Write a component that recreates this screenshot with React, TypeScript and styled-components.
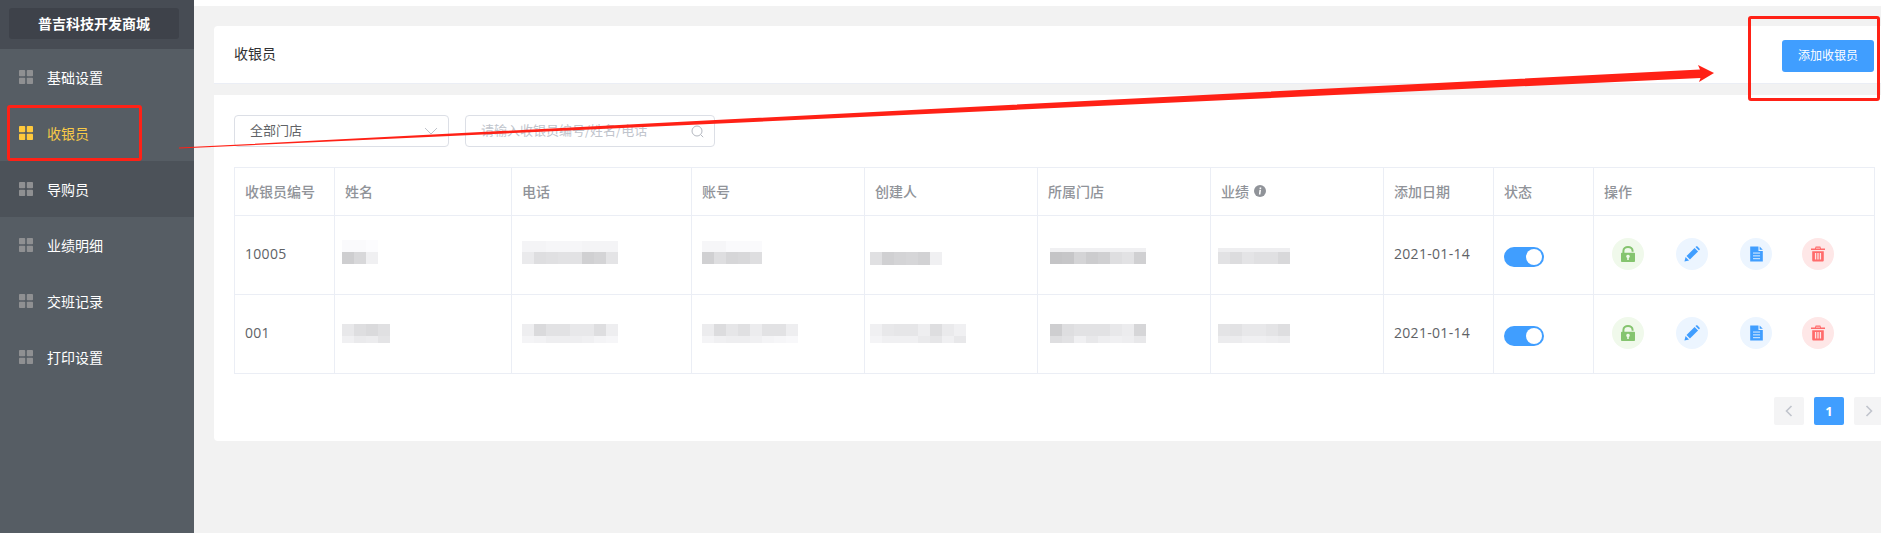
import React from "react";
import styled, { createGlobalStyle } from "styled-components";

const Global = createGlobalStyle`
  html, body { margin: 0; padding: 0; height: 100%; background: #fff; overflow: hidden; }
  body { font-family: "Noto Sans CJK SC", "Open Sans", sans-serif; }
  * { box-sizing: border-box; }
`;

const Page = styled.div`
  position: relative;
  display: flex;
  width: 1881px;
  height: 533px;
  overflow: hidden;
`;

const Sidebar = styled.aside`
  width: 194px;
  flex: none;
  background: #565d64;
`;

const Brand = styled.div`
  height: 49px;
  padding: 8px 15px 10px 9px;
  background: #474c54;
`;

const BrandBox = styled.div`
  height: 31px;
  border-radius: 3px;
  background: #3e424a;
  color: #fff;
  font-size: 14px;
  font-weight: 700;
  line-height: 31px;
  text-align: center;
`;

const MenuItem = styled.div<{ $active?: boolean; $dark?: boolean }>`
  display: flex;
  align-items: center;
  gap: 14px;
  height: 56px;
  padding-left: 19px;
  background: ${(p) => (p.$dark ? "#4c5259" : "transparent")};
  color: ${(p) => (p.$active ? "#f7c948" : "#fff")};
  font-size: 14px;
`;

const Main = styled.main`
  flex: 1;
  min-width: 0;
  margin-top: 6px;
  padding: 20px 0 0 20px;
  background: #f2f2f2;
`;

const TitleBar = styled.header`
  display: flex;
  align-items: center;
  justify-content: space-between;
  height: 58px;
  padding: 0 7px 0 20px;
  border-radius: 4px 0 0 0;
  border-bottom: 1px solid #ebeef5;
  background: #fff;
  color: #303133;
  font-size: 14px;
`;

const TitleText = styled.span`
  margin-bottom: 4px;
`;

const AddButton = styled.button`
  width: 92px;
  height: 32px;
  margin-top: 2px;
  padding: 0 0 2px;
  border: 0;
  border-radius: 3px;
  background: #409eff;
  color: #fff;
  font-family: inherit;
  font-size: 12px;
`;

const Card = styled.section`
  height: 346px;
  margin-top: 11px;
  padding: 20px 7px 0 20px;
  border-radius: 0 0 0 4px;
  background: #fff;
`;

const Filters = styled.div`
  display: flex;
  gap: 16px;
  height: 32px;
`;

const Field = styled.div<{ $w: number }>`
  display: flex;
  align-items: center;
  justify-content: space-between;
  width: ${(p) => p.$w}px;
  height: 32px;
  padding: 0 10px 0 15px;
  border: 1px solid #dcdfe6;
  border-radius: 4px;
  color: #606266;
  font-size: 13px;
`;

const FieldText = styled.span`
  margin-bottom: 3px;
`;

const Placeholder = styled(FieldText)`
  color: #c0c4cc;
`;

const Table = styled.table`
  width: 1640px;
  margin-top: 20px;
  border-collapse: collapse;
  table-layout: fixed;
  font-size: 14px;
  color: #606266;
`;

const Th = styled.th`
  height: 48px;
  padding: 0 0 2px 10px;
  border: 1px solid #ebeef5;
  color: #909399;
  font-size: 14px;
  font-weight: 500;
  text-align: left;
`;

const Td = styled.td`
  height: 79px;
  padding: 0 0 0 10px;
  border: 1px solid #ebeef5;
  font-family: "Open Sans", "Noto Sans CJK SC", sans-serif;
`;

const TextTd = styled(Td)`
  padding-bottom: 3px;
  letter-spacing: 0.3px;
`;

const HeadInner = styled.span`
  display: inline-flex;
  align-items: center;
  gap: 5px;
`;

const Mosaic = styled.div<{ $x: number; $y: number }>`
  display: flex;
  flex-direction: column;
  margin-left: ${(p) => p.$x}px;
  transform: translateY(${(p) => p.$y}px);
`;

const PixelRow = styled.div<{ $h: number }>`
  display: flex;
  height: ${(p) => p.$h}px;
`;

const Pixel = styled.span<{ $c: number }>`
  width: 12px;
  background: rgb(${(p) => p.$c}, ${(p) => p.$c}, ${(p) => p.$c + 2});
`;

const Toggle = styled.div`
  position: relative;
  top: 2px;
  width: 40px;
  height: 20px;
  border-radius: 10px;
  background: #409eff;
  &::after {
    content: "";
    position: absolute;
    top: 2px;
    right: 2px;
    width: 16px;
    height: 16px;
    border-radius: 50%;
    background: #fff;
  }
`;

const Actions = styled.div`
  display: flex;
  padding-left: 8px;
  margin-top: -2px;
`;

const Round = styled.span<{ $bg: string; $gap: number }>`
  display: flex;
  align-items: center;
  justify-content: center;
  flex: none;
  width: 32px;
  height: 32px;
  margin-right: ${(p) => p.$gap}px;
  border-radius: 50%;
  background: ${(p) => p.$bg};
`;

const Pager = styled.div`
  display: flex;
  justify-content: flex-end;
  gap: 10px;
  margin-top: 23px;
  margin-right: -10px;
`;

const PageBtn = styled.span<{ $on?: boolean }>`
  display: flex;
  align-items: center;
  justify-content: center;
  flex: none;
  width: 30px;
  height: 28px;
  border-radius: 2px;
  background: ${(p) => (p.$on ? "#409eff" : "#f4f4f5")};
  color: #fff;
  font-family: "Open Sans", sans-serif;
  font-size: 13px;
  font-weight: 700;
`;

const Mark = styled.div<{ $l: number; $t: number; $w: number; $h: number }>`
  position: absolute;
  left: ${(p) => p.$l}px;
  top: ${(p) => p.$t}px;
  width: ${(p) => p.$w}px;
  height: ${(p) => p.$h}px;
  border: 3px solid #ff2116;
  border-radius: 3px;
  pointer-events: none;
`;

const ArrowSvg = styled.svg`
  position: absolute;
  left: 0;
  top: 0;
  pointer-events: none;
`;

const Grid = ({ color }: { color: string }) => (
  <svg width="14" height="14" viewBox="0 0 14 14" fill={color}>
    <rect x="0" y="0" width="6.2" height="6.2" rx="0.8" />
    <rect x="7.8" y="0" width="6.2" height="6.2" rx="0.8" />
    <rect x="0" y="7.8" width="6.2" height="6.2" rx="0.8" />
    <rect x="7.8" y="7.8" width="6.2" height="6.2" rx="0.8" />
  </svg>
);

const LockIcon = () => (
  <svg width="14" height="16" viewBox="0 0 14 16">
    <path d="M2.4 7V4.9C2.4 2.6 4.5 1 7 1s4.6 1.6 4.6 3.9v.8" fill="none" stroke="#85c46f" strokeWidth="2" />
    <path
      fillRule="evenodd"
      fill="#85c46f"
      d="M.8 6.8h12.4c.4 0 .8.4.8.8v7.6c0 .4-.4.8-.8.8H.8c-.4 0-.8-.4-.8-.8V7.6c0-.4.4-.8.8-.8zM7 8.7a1.8 1.8 0 0 0-.8 3.4V14h1.6v-1.9A1.8 1.8 0 0 0 7 8.7z"
    />
  </svg>
);

const PenIcon = () => (
  <svg width="16" height="16" viewBox="0 0 18 18" fill="#409eff">
    <path d="M0.5 17.5l1.3-5.2 3.9 3.9z" />
    <path d="M2.8 11.3L11.9 2.2l3.9 3.9-9.1 9.1z" />
    <path d="M12.9 1.2l1-.8c.3-.2.7-.2 1 0l2.7 2.7c.2.3.2.7 0 1l-.8 1z" />
  </svg>
);

const DocIcon = () => (
  <svg width="13" height="16" viewBox="0 0 13.4 17">
    <path fill="#409eff" d="M0 .5h8.8V5.2H13.4V16.5H0z" />
    <path fill="#409eff" d="M10 .5l3.4 3.5H10z" />
    <path stroke="#ecf5ff" strokeWidth="1" d="M3 7.5h7.5M3 10.5h7.5M3 13.5h7.5" />
  </svg>
);

const TrashIcon = () => (
  <svg width="14" height="16" viewBox="0 0 15 16">
    <path fill="#ff6b6b" d="M5 0h5l.8 2H15v1.8H0V2h4.2zM5.6 1.2l-.3.8h4.4l-.3-.8z" />
    <path
      fill="#ff6b6b"
      fillRule="evenodd"
      d="M1.3 5h12.4v9.6c0 .8-.6 1.4-1.4 1.4H2.7c-.8 0-1.4-.6-1.4-1.4zM4.2 7v6.8h1.4V7zM6.8 7v6.8h1.4V7zM9.4 7v6.8h1.4V7z"
    />
  </svg>
);

const Chevron = ({ dir }: { dir: "l" | "r" }) => (
  <svg width="8" height="12" viewBox="0 0 8 12" fill="none" stroke="#c0c4cc" strokeWidth="1.6">
    <path d={dir === "l" ? "M6.5 1L1.5 6l5 5" : "M1.5 1l5 5-5 5"} />
  </svg>
);

const InfoIcon = () => (
  <svg width="12" height="12" viewBox="0 0 12 12">
    <circle cx="6" cy="6" r="6" fill="#909399" />
    <path fill="#fff" d="M5.4 5h1.6L6.4 9.4H4.9zM5.7 2.6h1.6l-.2 1.6H5.5z" />
  </svg>
);

const menu = ["基础设置", "收银员", "导购员", "业绩明细", "交班记录", "打印设置"];

const columns: [string, number][] = [
  ["收银员编号", 100],
  ["姓名", 177],
  ["电话", 180],
  ["账号", 173],
  ["创建人", 173],
  ["所属门店", 173],
  ["业绩", 173],
  ["添加日期", 110],
  ["状态", 100],
  ["操作", 281],
];

type Blur = { x: number; y: number; rows: [number, number[]][] };

const rows: { id: string; blur: Blur[] }[] = [
  {
    id: "10005",
    blur: [
      { x: -3, y: -3, rows: [[12, [250, 250, 252]], [12, [206, 216, 240]]] },
      { x: 0, y: -3, rows: [[11, [244, 244, 246, 246, 246, 244, 244, 244]], [12, [234, 222, 224, 226, 226, 208, 212, 228]]] },
      { x: 0, y: -3, rows: [[11, [246, 246, 250, 250, 250]], [12, [208, 222, 214, 216, 222]]] },
      { x: -5, y: 3, rows: [[13, [224, 208, 212, 214, 210, 240]]] },
      { x: 2, y: 1, rows: [[4, [240, 240, 240, 240, 240, 240, 240, 240]], [12, [196, 198, 212, 204, 208, 222, 226, 208]]] },
      { x: -3, y: 1, rows: [[4, [238, 238, 238, 238, 238, 238]], [12, [226, 220, 228, 224, 224, 216]]] },
    ],
  },
  {
    id: "001",
    blur: [
      { x: -3, y: -1, rows: [[12, [232, 222, 218, 224]], [7, [240, 234, 236, 228]]] },
      { x: 0, y: -1, rows: [[12, [238, 218, 226, 226, 232, 232, 222, 238]], [7, [244, 242, 238, 238, 238, 240, 244, 246]]] },
      { x: 0, y: -1, rows: [[12, [236, 220, 230, 224, 236, 226, 226, 238]], [7, [244, 240, 238, 238, 240, 244, 246, 248]]] },
      { x: -5, y: -1, rows: [[12, [240, 232, 230, 230, 238, 222, 234, 240]], [7, [244, 240, 240, 240, 234, 230, 240, 232]]] },
      { x: 2, y: -1, rows: [[12, [206, 222, 226, 226, 226, 232, 236, 214]], [7, [222, 226, 240, 232, 238, 240, 238, 232]]] },
      { x: -3, y: -1, rows: [[12, [228, 226, 232, 232, 228, 222]], [7, [236, 236, 240, 240, 238, 236]]] },
    ],
  },
];

export default function App() {
  return (
    <Page>
      <Global />
      <Sidebar>
        <Brand>
          <BrandBox>普吉科技开发商城</BrandBox>
        </Brand>
        {menu.map((m, i) => (
          <MenuItem key={m} $active={i === 1} $dark={i === 2}>
            <Grid color={i === 1 ? "#ffc93c" : "#8f9092"} />
            {m}
          </MenuItem>
        ))}
      </Sidebar>
      <Main>
        <TitleBar>
          <TitleText>收银员</TitleText>
          <AddButton>添加收银员</AddButton>
        </TitleBar>
        <Card>
          <Filters>
            <Field $w={215}>
              <FieldText>全部门店</FieldText>
              <svg width="14" height="8" viewBox="0 0 14 8" fill="none" stroke="#c0c4cc" strokeWidth="1">
                <path d="M1 1l6 6 6-6" />
              </svg>
            </Field>
            <Field $w={250}>
              <Placeholder>请输入收银员编号/姓名/电话</Placeholder>
              <svg width="13" height="13" viewBox="0 0 13 13" fill="none" stroke="#b4b8c0" strokeWidth="1">
                <circle cx="6" cy="6" r="5" />
                <path d="M9.6 9.6l2.6 2.6" />
              </svg>
            </Field>
          </Filters>
          <Table>
            <colgroup>
              {columns.map(([n, w]) => (
                <col key={n} width={w} />
              ))}
            </colgroup>
            <thead>
              <tr>
                {columns.map(([n]) => (
                  <Th key={n}>
                    <HeadInner>
                      {n}
                      {n === "业绩" && <InfoIcon />}
                    </HeadInner>
                  </Th>
                ))}
              </tr>
            </thead>
            <tbody>
              {rows.map((r) => (
                <tr key={r.id}>
                  <TextTd>{r.id}</TextTd>
                  {r.blur.map((b, i) => (
                    <Td key={i}>
                      <Mosaic $x={b.x} $y={b.y}>
                        {b.rows.map(([h, cells], j) => (
                          <PixelRow key={j} $h={h}>
                            {cells.map((c, k) => (
                              <Pixel key={k} $c={c} />
                            ))}
                          </PixelRow>
                        ))}
                      </Mosaic>
                    </Td>
                  ))}
                  <TextTd>2021-01-14</TextTd>
                  <Td>
                    <Toggle />
                  </Td>
                  <Td>
                    <Actions>
                      <Round $bg="#f0f9eb" $gap={32}><LockIcon /></Round>
                      <Round $bg="#ecf5ff" $gap={32}><PenIcon /></Round>
                      <Round $bg="#ecf5ff" $gap={30}><DocIcon /></Round>
                      <Round $bg="#fee7e7" $gap={0}><TrashIcon /></Round>
                    </Actions>
                  </Td>
                </tr>
              ))}
            </tbody>
          </Table>
          <Pager>
            <PageBtn><Chevron dir="l" /></PageBtn>
            <PageBtn $on>1</PageBtn>
            <PageBtn><Chevron dir="r" /></PageBtn>
          </Pager>
        </Card>
      </Main>
      <Mark $l={7} $t={105} $w={135} $h={56} />
      <Mark $l={1748} $t={16} $w={132} $h={85} />
      <ArrowSvg width="1881" height="533">
        <path fill="#ff2116" d="M179 147.6L1700 69.5L1698 65L1714 73L1699 82L1700.5 78L179 148.6Z" />
      </ArrowSvg>
    </Page>
  );
}
